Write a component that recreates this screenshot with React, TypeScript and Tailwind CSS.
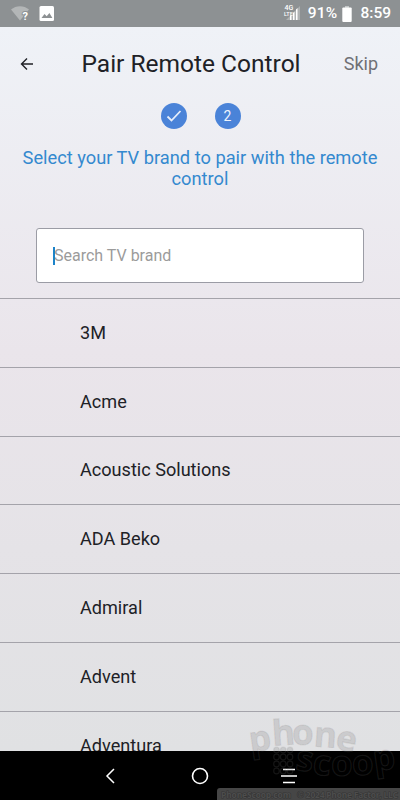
import { useState } from 'react'

interface WatermarkLetter {
  char: string
  x: number
  y: number
  rotate: number
}

const brands = ['3M', 'Acme', 'Acoustic Solutions', 'ADA Beko', 'Admiral', 'Advent', 'Adventura']

const watermarkLetters: WatermarkLetter[] = [
  { char: 'p', x: 249, y: 751, rotate: -8 },
  { char: 'h', x: 272, y: 745, rotate: -4 },
  { char: 'o', x: 292, y: 745, rotate: 0 },
  { char: 'n', x: 314, y: 747, rotate: 4 },
  { char: 'e', x: 336, y: 751, rotate: 10 },
  { char: 's', x: 296, y: 771, rotate: 8 },
  { char: 'c', x: 313, y: 775, rotate: 6 },
  { char: 'o', x: 331, y: 776, rotate: 0 },
  { char: 'o', x: 352, y: 775, rotate: -2 },
  { char: 'p', x: 373, y: 770, rotate: -8 },
]

function StatusBar() {
  return (
    <header className="h-[27px] shrink-0 bg-[#8d9193] flex items-center justify-between pl-[11px] pr-[9px] text-white">
      <svg width="44" height="27" viewBox="0 0 44 27">
        <path d="M0 9.5C5 5 13 5 18 9.5L9 20.5Z" fill="#b3b6b7" />
        <text x="11.5" y="20" fontSize="11" fontWeight="700" fill="#fff" stroke="#8d9193" strokeWidth="2" paintOrder="stroke">?</text>
        <rect x="28.5" y="6" width="14.5" height="15" rx="1.5" fill="#fff" />
        <path d="M30.5 18l3-4 2.2 2.3 2.7-3.3 3 5z" fill="#8d9193" />
      </svg>
      <div className="flex items-center text-base font-medium">
        <svg width="18" height="27" viewBox="0 0 18 27">
          <path d="M4 20L18 6V20Z" fill="#aeb1b2" />
          <path d="M8 20v-4l1.500-1.500V20zM11 20v-7l1.500-1.500V20zM14 20V9.500l1.500-1.500V20z" fill="#fff" />
          <text x="2.500" y="10" fontSize="7" fill="#fff">4G</text>
          <text x="2" y="15.500" fontSize="5.500" fill="#fff">LTE</text>
        </svg>
        <span className="ml-[8px] text-[15.5px] tracking-[0.2px]">91%</span>
        <svg className="ml-[5px]" width="10" height="16" viewBox="0 0 10 16">
          <path d="M3 0h4v2H3z" fill="#c3c6c7" />
          <rect x="0.300" y="1.500" width="9.400" height="14.500" rx="1" fill="#fff" />
        </svg>
        <span className="ml-[8px] text-[15.5px]">8:59</span>
      </div>
    </header>
  )
}

function Watermark() {
  return (
    <svg className="absolute inset-0 pointer-events-none" width="400" height="800" viewBox="0 0 400 800">
      <g
        fill="#000"
        fillOpacity="0.1"
        stroke="#808080"
        strokeOpacity="0.16"
        strokeWidth="1.2"
        fontFamily="'Open Sans', sans-serif"
        fontWeight="700"
        fontSize="35"
      >
        {watermarkLetters.map((l, i) => (
          <text key={i} x={l.x} y={l.y} transform={`rotate(${l.rotate} ${l.x + 10} ${l.y - 10})`}>
            {l.char}
          </text>
        ))}
        {[750, 757, 764, 771].map((y) =>
          [276.5, 283.2, 290].map((x) => <circle key={`${x}-${y}`} cx={x} cy={y} r="2.8" />)
        )}
      </g>
      <path d="M217 800v-9q0-3 3-3h180v12z" fill="#464646" />
      <g fill="#4d4d4d" stroke="#343434" strokeWidth="1" paintOrder="stroke" fontSize="8.5" fontFamily="'Open Sans', sans-serif" fontWeight="700">
        <text x="221" y="798" textLength="70">PhoneScoop.com</text>
        <text x="297" y="798" textLength="101">© 2024 Phone Factor, LLC</text>
      </g>
    </svg>
  )
}

export default function App() {
  const [query, setQuery] = useState('')

  const visibleBrands = brands.filter((b) => b.toLowerCase().includes(query.toLowerCase()))

  return (
    <div className="relative w-[400px] h-[800px] overflow-hidden flex flex-col bg-black font-['Roboto',sans-serif] text-[#202126]">
      <StatusBar />

      <main className="flex-1 min-h-0 overflow-hidden flex flex-col bg-linear-to-b from-[#eff2f7] via-[#eae5eb] via-45% to-[#e0e1e3]">
        {/* Title bar */}
        <div className="h-[75.5px] shrink-0 flex items-center pl-5 pr-[22px]">
          <button aria-label="Back" className="-mt-px">
            <svg width="14" height="14" viewBox="0 0 14 14" fill="none" stroke="#202126" strokeWidth="1.4">
              <path d="M13 7H1.5M7 1.5L1.5 7L7 12.5" />
            </svg>
          </button>
          <h1 className="text-[24.5px] leading-8 ml-[47.5px] -mt-px whitespace-nowrap">Pair Remote Control</h1>
          <button className="ml-auto -mt-px text-lg text-[#6f7075]">Skip</button>
        </div>

        {/* Steps */}
        <div className="shrink-0 flex justify-center gap-7 pl-px">
          <div className="size-[26px] rounded-full bg-[#4a83d8] flex items-center justify-center">
            <svg width="16" height="14" viewBox="0 0 16 14" fill="none" stroke="#e6eefa" strokeWidth="1.8">
              <path d="M1.5 7.5L5.5 11.5L14.5 2" />
            </svg>
          </div>
          <div className="size-[26px] rounded-full bg-[#4a83d8] flex items-center justify-center text-sm text-[#eef4fc]">2</div>
        </div>
        <p className="shrink-0 mt-[18.5px] px-4 text-center text-[18.25px] leading-[21px] text-[#3489cf]">
          Select your TV brand to pair with the remote control
        </p>

        {/* Search */}
        <div className="shrink-0 mt-[39px] mx-9 h-[55px] flex items-center border border-[#9b9ca5] rounded-[3px] bg-white pl-4">
          <span className="w-[2px] h-[18px] bg-[#1c83ca]"></span>
          <input
            className="flex-1 -ml-px bg-transparent text-base outline-none placeholder:text-[#9b9b9b]"
            placeholder="Search TV brand"
            value={query}
            onChange={(e) => setQuery(e.target.value)}
          />
        </div>

        <ul className="mt-[14.8px] shrink-0">
          {visibleBrands.map((brand) => (
            <li key={brand} className="h-[68.86px] flex items-center border-t border-[#a4a3aa] pl-20 pb-px text-[18.1px]">
              {brand}
            </li>
          ))}
        </ul>
      </main>

      {/* Navigation bar */}
      <nav className="h-[49px] shrink-0 bg-black flex items-center pl-[105px]">
        <svg width="10" height="16" viewBox="0 0 10 16" fill="none" stroke="#fff" strokeWidth="1.5">
          <path d="M9 1L2 8L9 15" />
        </svg>
        <svg className="ml-[76px]" width="18" height="18" viewBox="0 0 18 18" fill="none" stroke="#fff" strokeWidth="1.6">
          <circle cx="9" cy="9" r="7.5" />
        </svg>
        <svg className="ml-[72px]" width="16" height="16" viewBox="0 0 16 16" stroke="#fff" strokeWidth="1.7">
          <path d="M2 1.5h12M0 8h16M2 14.5h12" />
        </svg>
      </nav>

      <Watermark />
    </div>
  )
}
